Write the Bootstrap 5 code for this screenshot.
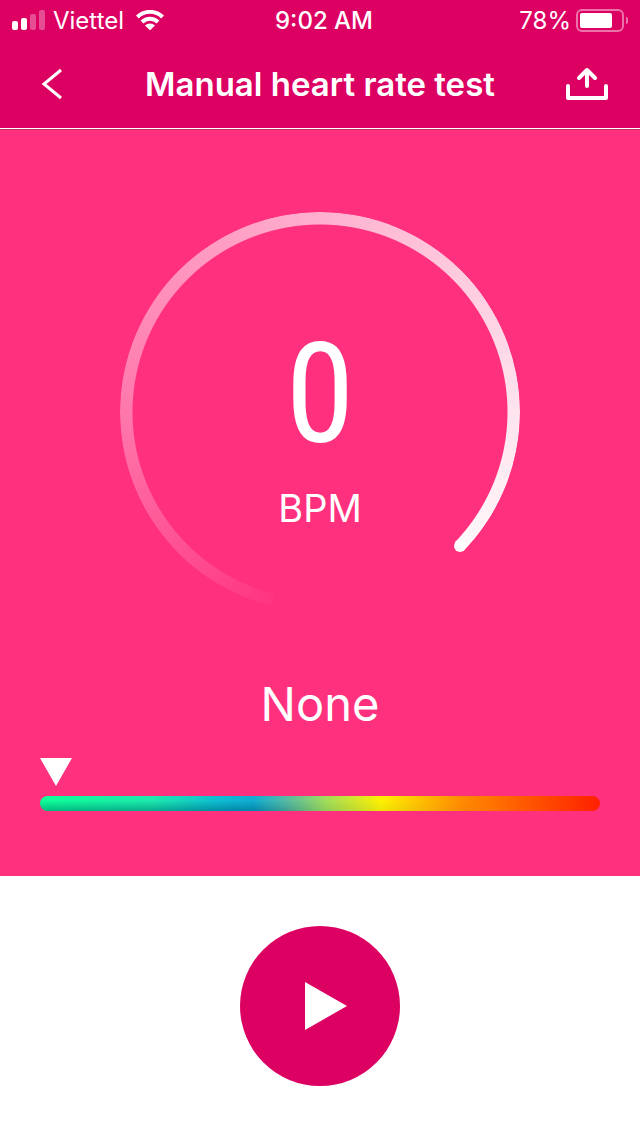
<!DOCTYPE html>
<html lang="en">
<head>
<meta charset="utf-8">
<meta name="viewport" content="width=device-width, initial-scale=1">
<title>Manual heart rate test</title>
<link href="https://cdn.jsdelivr.net/npm/bootstrap@5.3.0/dist/css/bootstrap.min.css" rel="stylesheet">
<style>
  :root { --deep: #dc0063; --hot: #ff317f; }
  body { font-family: Inter, "Liberation Sans", sans-serif; color: #fff; }
  .top-area { background: var(--deep); border-bottom: 1px solid #fff; }
  .status { height: 40px; font-size: 24px; line-height: 40px; padding: 0 12px; }
  .status > * { flex: 1 1 0; }
  .status span { padding-top: 1px; }
  .clock { font-weight: 500; }
  .title-bar { height: 88px; padding: 0 26px; }
  .title-bar h1 { font-size: 33px; line-height: 40px; font-weight: 600; }
  .tool { width: 52px; height: 52px; border: 0; background: none; color: #fff; }
  .reading { background: var(--hot); padding: 83px 40px 65px; box-shadow: inset 0 1px #c4326c; }
  .gauge { display: grid; width: 400px; height: 400px; }
  .gauge > * { grid-area: 1 / 1; }
  .ring {
    border-radius: 50%;
    background: conic-gradient(from 194deg, rgba(255,255,255,.02), rgba(255,255,255,.35) 76deg, rgba(255,255,255,.62) 166deg, rgba(255,255,255,.87) 256deg, rgba(255,255,255,.97) 300deg, transparent 300deg);
    -webkit-mask: radial-gradient(closest-side, transparent 187px, #000 188px);
    mask: radial-gradient(closest-side, transparent 187px, #000 188px);
  }
  .rate { font-family: "Liberation Sans Narrow", "Roboto Condensed", Roboto, sans-serif; font-size: 140px; line-height: 142px; font-weight: 400; padding-top: 111px; }
  .unit { font-size: 38px; line-height: 48px; margin-top: 19px; }
  .level { font-size: 47px; line-height: 60px; margin-top: 62px; }
  .scale { margin-top: 24px; }
  .spectrum {
    height: 15px; border-radius: 8px; margin-top: 10px;
    background: linear-gradient(90deg, #00ff90, #10e8a8 20%, #00b8d0 32%, #04a8d0 38%, #50b8a0 44%, #a0dc58 51%, #fff000 61%, #ff8c00 75%, #ff5200 88%, #ff2000);
  }
  .shade { height: 15px; border-radius: 8px; background: linear-gradient(rgba(255,255,255,.06) 30%, rgba(0,60,90,.35)); -webkit-mask: linear-gradient(90deg, #000 36%, rgba(0,0,0,.3) 50%, transparent 80%); mask: linear-gradient(90deg, #000 36%, rgba(0,0,0,.3) 50%, transparent 80%); }
  .play { width: 160px; height: 160px; border: 0; background: var(--deep); }
</style>
</head>
<body class="d-flex flex-column min-vh-100 bg-white">
<header class="top-area">
  <div class="status d-flex align-items-center">
    <div class="d-flex align-items-center">
      <svg width="33" height="20" viewBox="0 0 33 20" fill="#fff" aria-hidden="true">
        <rect y="11" width="6" height="9" rx="2"/><rect x="9" y="8" width="6" height="12" rx="2"/>
        <g opacity=".3"><rect x="18" y="4" width="6" height="16" rx="2"/><rect x="27" width="6" height="20" rx="2"/></g>
      </svg>
      <span class="mx-2">Viettel</span>
      <svg class="ms-1" width="28" height="20" viewBox="0 0 28 20" aria-hidden="true">
        <g fill="none" stroke="#fff" stroke-width="4"><path d="M1.400 7A18 18 0 0 1 26.600 7"/><path d="M6 12A11.500 11.500 0 0 1 22 12"/></g>
        <path fill="#fff" d="M9 15.500A7.500 7.500 0 0 1 19 15.500L14 20.300Z"/>
      </svg>
    </div>
    <div class="text-center ps-2"><span class="clock d-inline-block">9:02 AM</span></div>
    <div class="d-flex align-items-center justify-content-end">
      <span>78%</span>
      <svg class="ms-1" width="53" height="24" viewBox="1 0 53 24" aria-hidden="true">
        <rect x="3" y="2" width="46" height="21" rx="5" fill="none" stroke="#fff" stroke-opacity=".45" stroke-width="2"/>
        <rect x="6" y="5" width="32" height="15" rx="2" fill="#fff"/>
        <path d="M52 8.500Q54.500 10 54.500 12.500T52 16.500Z" fill="#fff" opacity=".45"/>
      </svg>
    </div>
  </div>
  <nav class="title-bar d-flex align-items-center justify-content-between" aria-label="Page">
    <button class="tool p-0" type="button" aria-label="Back">
      <svg class="d-block" width="52" height="52" viewBox="0 0 52 52" fill="none" stroke="currentColor" stroke-width="3"><path d="M35 12L18 26L35 40"/></svg>
    </button>
    <h1 class="m-0 text-nowrap">Manual heart rate test</h1>
    <button class="tool p-0" type="button" aria-label="Share">
      <svg class="d-block" width="52" height="52" viewBox="0 0 52 52" fill="none" stroke="currentColor" stroke-width="4" stroke-linecap="round" stroke-linejoin="round"><path d="M6 28V40H44V28M25 28V12M17 20L25 12L33 20"/></svg>
    </button>
  </nav>
</header>
<main class="reading">
  <div class="gauge mx-auto">
    <div class="ring"></div>
    <svg viewBox="0 0 400 400" aria-hidden="true"><circle cx="340" cy="334" r="6" fill="#fff8fa"/></svg>
    <div class="text-center">
      <div class="rate">0</div>
      <div class="unit">BPM</div>
    </div>
  </div>
  <div class="level text-center">None</div>
  <div class="scale">
    <svg class="d-block" width="32" height="28" viewBox="0 0 32 28" aria-hidden="true"><path d="M0 0H32L16 28Z" fill="#fff"/></svg>
    <div class="spectrum" role="meter" aria-label="Heart rate zone" aria-valuemin="0" aria-valuemax="220" aria-valuenow="0"><div class="shade"></div></div>
  </div>
</main>
<footer class="flex-grow-1 d-flex align-items-center justify-content-center py-4">
  <button class="play rounded-circle p-0" type="button" aria-label="Start test">
    <svg class="d-block" width="160" height="160" viewBox="0 0 160 160"><path d="M65 56L107 80L65 104Z" fill="#fff"/></svg>
  </button>
</footer>
<script src="https://cdn.jsdelivr.net/npm/bootstrap@5.3.0/dist/js/bootstrap.bundle.min.js"></script>
</body>
</html>
